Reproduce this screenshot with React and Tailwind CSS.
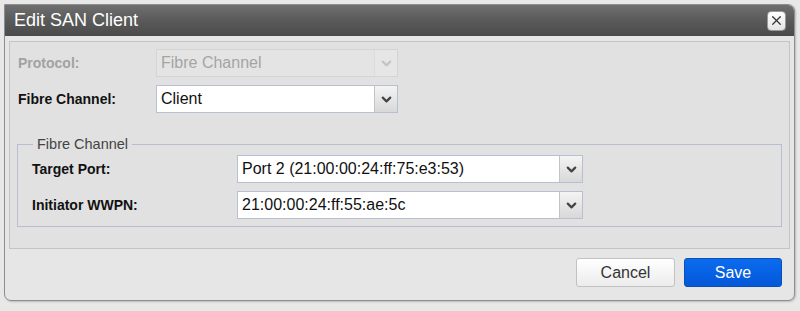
import { ChevronDown, X } from "lucide-react";

const font = { fontFamily: '"Liberation Sans", Arial, sans-serif' };

const Select = ({ value, width, disabled }) => (
  <div
    className={`flex h-[28px] border ${
      disabled ? "border-[#d4d4d4] bg-[#e4e4e4]" : "border-[#b9bfd3] bg-white"
    } ${width}`}
  >
    <div
      className={`flex-1 flex items-center px-[4px] text-[16px] ${
        disabled ? "text-[#a4a4a4]" : "text-[#111]"
      }`}
    >
      {value}
    </div>
    <div
      className={`w-[23px] flex items-center justify-center border-l ${
        disabled
          ? "border-[#dcdcdc] bg-[#e6e6e6] text-[#c4c4c4]"
          : "border-[#c4c4c4] bg-gradient-to-b from-[#f4f4f4] to-[#d8d8d8] text-[#444]"
      }`}
    >
      <ChevronDown size={15} strokeWidth={3.5} />
    </div>
  </div>
);

const App = () => {
  return (
    <div className="w-[800px] h-[311px] bg-[#e8e8e8] pt-[4px] pl-[4px] pr-[5px]" style={font}>
      <div className="h-[297px] border border-[#8e8e8e] rounded-tr-[7px] rounded-b-[7px] bg-[#e6e6e6] shadow-[1px_1px_2px_rgba(0,0,0,0.2)] overflow-hidden flex flex-col">
        <div className="h-[31px] flex items-center justify-between bg-gradient-to-b from-[#6f6f6f] via-[#5a5a5a] to-[#4b4b4b] pl-[9px] pr-[8px]">
          <span className="text-white text-[18px]">Edit SAN Client</span>
          <div className="w-[19px] h-[20px] rounded-[4px] bg-gradient-to-b from-white to-[#e4e4e4] border border-[#9a9a9a] flex items-center justify-center text-[#333]">
            <X size={15} strokeWidth={2} />
          </div>
        </div>
        <div className="flex-1 px-[4px] pt-[5px]">
          <div className="h-[208px] border border-[#cac2c2] bg-[#e1e1e1] px-[7px] pt-[7px]">
            <div className="flex items-center h-[28px]">
              <div className="w-[139px] pl-[1px] text-[14px] font-bold text-[#a2a2a2]">Protocol:</div>
              <Select value="Fibre Channel" width="w-[242px]" disabled />
            </div>
            <div className="flex items-center h-[28px] mt-[8px]">
              <div className="w-[139px] pl-[1px] text-[14px] font-bold text-[#111]">Fibre Channel:</div>
              <Select value="Client" width="w-[242px]" />
            </div>
            <fieldset className="mt-[21px] border border-[#b8bdd0] pl-[14px] pr-[10px] pb-[6px]">
              <legend className="px-[4px] ml-[1px] text-[14.5px] text-[#444]">Fibre Channel</legend>
              <div className="flex items-center h-[29px] -mt-[1px]">
                <div className="w-[205px] text-[14px] font-bold text-[#111]">Target Port:</div>
                <Select value="Port 2 (21:00:00:24:ff:75:e3:53)" width="w-[346px]" />
              </div>
              <div className="flex items-center h-[29px] mt-[7px]">
                <div className="w-[205px] text-[14px] font-bold text-[#111]">Initiator WWPN:</div>
                <Select value="21:00:00:24:ff:55:ae:5c" width="w-[346px]" />
              </div>
            </fieldset>
          </div>
          <div className="flex justify-end gap-[9px] mt-[9px] pr-[8px]">
            <button className="w-[99px] h-[29px] rounded-[3px] border border-[#c2c2c2] bg-gradient-to-b from-white to-[#ececec] text-[16px] text-[#333]">
              Cancel
            </button>
            <button className="w-[98px] h-[29px] rounded-[3px] border border-[#0a4fb5] bg-gradient-to-b from-[#0b6cf0] to-[#0557d8] text-[16px] text-white">
              Save
            </button>
          </div>
        </div>
      </div>
    </div>
  );
};

export default App;
